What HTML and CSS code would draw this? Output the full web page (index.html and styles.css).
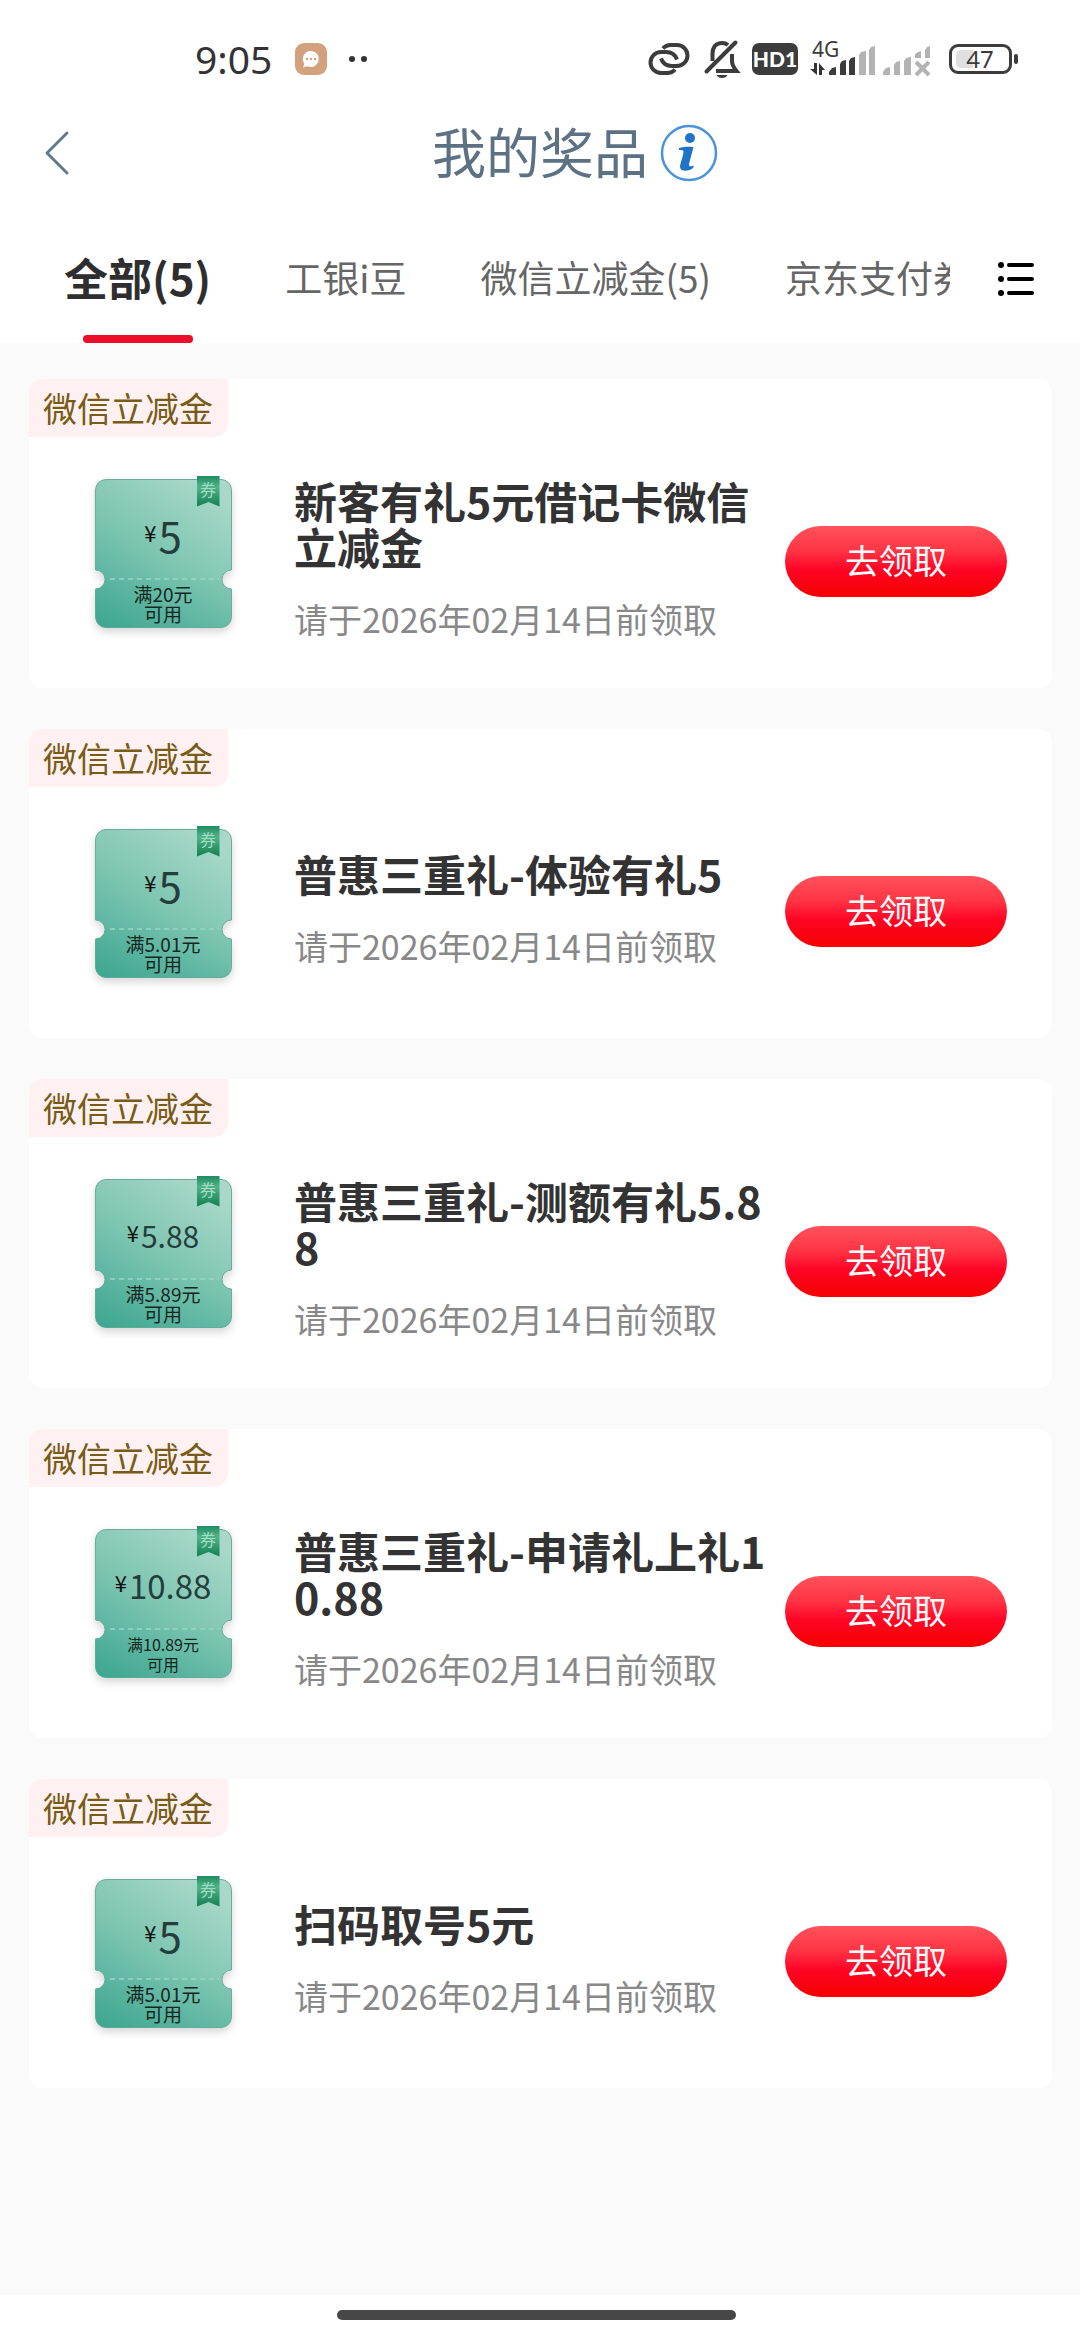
FILE: index.html
```html
<!DOCTYPE html>
<html lang="zh-CN">
<head>
<meta charset="utf-8">
<meta name="viewport" content="width=device-width, initial-scale=1">
<title>我的奖品</title>
<link rel="stylesheet" href="styles.css">
</head>
<body>
<svg class="defs" width="0" height="0" aria-hidden="true">
  <defs>
    <linearGradient id="ticket-fill" x1="0.1" y1="1" x2="0.75" y2="0">
      <stop offset="0" stop-color="#45aa95"/>
      <stop offset="0.5" stop-color="#7cc5b1"/>
      <stop offset="1" stop-color="#a9d8c8"/>
    </linearGradient>
    <linearGradient id="ticket-stub" x1="0" y1="1" x2="1" y2="0">
      <stop offset="0" stop-color="#36a38c" stop-opacity="0.5"/>
      <stop offset="1" stop-color="#6fc0aa" stop-opacity="0.2"/>
    </linearGradient>
    <linearGradient id="ribbon-fill" x1="0" y1="0" x2="0" y2="1">
      <stop offset="0" stop-color="#1f8a60"/>
      <stop offset="0.35" stop-color="#4fb38a"/>
      <stop offset="1" stop-color="#148052"/>
    </linearGradient>
    <filter id="ticket-shadow" x="-20%" y="-20%" width="140%" height="140%">
      <feDropShadow dx="0" dy="4" stdDeviation="4" flood-color="#000" flood-opacity="0.16"/>
    </filter>
    <symbol id="ticket" viewBox="0 0 160 171">
      <path filter="url(#ticket-shadow)" fill="url(#ticket-fill)" stroke="#6aab9a" d="M23 3.500H138a10.500 10.500 0 0 1 10.500 10.500V94a9.500 9.500 0 0 0 0 19V141a10.500 10.500 0 0 1-10.500 10.500H23a10.500 10.500 0 0 1-10.500-10.500V113a9.500 9.500 0 0 0 0-19V14A10.500 10.500 0 0 1 23 3.500z"/>
      <path fill="url(#ticket-stub)" d="M22 103.500H139a9.500 9.500 0 0 0 9.500 9.500V141a10.500 10.500 0 0 1-10.500 10.500H23a10.500 10.500 0 0 1-10.500-10.500V113a9.500 9.500 0 0 0 9.500-9.500z"/>
      <path fill="none" stroke="#9bd6c5" stroke-width="1.500" stroke-dasharray="5 4" d="M27 103H136"/>
      <path fill="url(#ribbon-fill)" d="M114 0H136.500V30.500L125.500 26 114 30.500z"/>
      <text x="125" y="20" text-anchor="middle" class="ribbon-text">券</text>
    </symbol>
  </defs>
</svg>

<div class="page">
  <header class="header">
    <div class="status">
      <div class="status-left">
        <span class="clock">9:05</span>
        <svg class="chat-icon" width="32" height="32" viewBox="0 0 32 32" aria-hidden="true">
          <rect width="32" height="32" rx="9" fill="#d3a27c"/>
          <path d="M16 8a8 8 0 1 1-3.500 15.300L8 24.500l1.400-3.800A8 8 0 0 1 16 8z" fill="#fff"/>
          <g fill="#d3a27c"><circle cx="12" cy="16" r="1.200"/><circle cx="16" cy="16" r="1.200"/><circle cx="20" cy="16" r="1.200"/></g>
        </svg>
        <svg width="18" height="6" viewBox="0 0 18 6" aria-hidden="true"><g fill="#333"><circle cx="3" cy="3" r="3"/><circle cx="15" cy="3" r="3"/></g></svg>
      </div>
      <div class="status-right">
        <svg class="link-icon" width="42" height="38" viewBox="0 0 42 38" fill="none" stroke="#3c3c3c" stroke-width="4" aria-hidden="true">
          <path d="M15 8.500C17 6 20 5 23 5h6a10.500 10.500 0 0 1 0 21h-5c-5 0-9-2-11-7.500"/>
          <path d="M27 29.500C25 32 22 33 19 33h-6a10.500 10.500 0 0 1 0-21h5c5 0 9 2 11 7.500"/>
        </svg>
        <svg class="bell-icon" width="36" height="38" viewBox="0 0 36 38" fill="none" stroke="#3c3c3c" stroke-width="4" aria-hidden="true">
          <path d="M8.500 21V14C8.500 7 12 3 18 3c2.500 0 4.500.700 6 2"/>
          <path d="M28 14v7c0 4 2 7 4.500 10H12"/>
          <path d="M31.500 2.500L2.500 31.500" stroke-linecap="round"/>
          <path d="M12.500 35h11c-1.500 4-9.500 4-11 0z" fill="#3c3c3c" stroke="none"/>
        </svg>
        <span class="hd">HD1</span>
        <svg class="signal" width="68" height="36" viewBox="0 0 68 36" aria-hidden="true">
          <text x="3" y="16" class="net">4G</text>
          <path d="M1 28h4V22h3V34zM10 34V22l6 7h-3v5z" fill="#333"/>
          <g fill="#3c3c3c"><path d="M20 34v-3l3-4 4-1v8zM31 34V23l2-3 4-1v15zM40 34V20l2-3 4-1v18z"/></g>
          <g fill="#b3b3b3"><path d="M50 34V14l2-3 5-1v24zM60 34V9l2-3 4-1v29z"/></g>
        </svg>
        <svg class="signal-off" width="49" height="36" viewBox="0 0 49 36" fill="#b3b3b3" aria-hidden="true">
          <path d="M0 34v-3l3-4 4-1v8zM11 34V24l2-3 4-1v14zM21 34V20l2-3 5-1v18zM32 17v-4l3-2 3-1v7zM42 17V9l2-3 3-1v12z"/>
          <path d="M33 21l13 13M46 21L33 34" stroke="#b3b3b3" stroke-width="4"/>
        </svg>
        <svg class="battery" width="69" height="32" viewBox="0 0 69 32" aria-hidden="true">
          <rect x="1.500" y="2.500" width="60" height="27" rx="7.500" fill="#fff" stroke="#3c3c3c" stroke-width="3"/>
          <path d="M24 7H12a5 5 0 0 0-5 5v8a5 5 0 0 0 5 5h12z" fill="#e0e0e0"/>
          <rect x="65" y="11" width="4" height="10" rx="2" fill="#3c3c3c"/>
          <text x="31" y="25" text-anchor="middle" class="level">47</text>
        </svg>
      </div>
    </div>

    <div class="titlebar">
      <button class="back" type="button" aria-label="返回">
        <svg width="26" height="44" viewBox="0 0 26 44" fill="none" stroke="#5f7a8c" stroke-width="3" stroke-linecap="round" stroke-linejoin="round" aria-hidden="true"><path d="M23 2L3 22l20 20"/></svg>
      </button>
      <h1>我的奖品</h1>
      <button class="info" type="button" aria-label="说明">
        <svg width="58" height="58" viewBox="0 0 58 58" aria-hidden="true">
          <circle cx="29" cy="29" r="27" fill="#fff" stroke="#4b93d8" stroke-width="2.500"/>
          <circle cx="30" cy="14" r="5" fill="#1f74c8"/>
          <path d="M19 24c5-1.500 10-1.500 14.500-1l-4.500 17c-.5 2.500 1.500 3 4.500 1.500v2c-4 4-13 5-13.500-.5 0-3 3.500-12 3.500-15.500 0-1.500-1.500-1.500-4.500-1.500z" fill="#1f74c8"/>
        </svg>
      </button>
    </div>

    <div class="tabbar">
      <nav class="tabs" aria-label="奖品分类">
        <a class="tab active" href="#all" aria-current="page">全部(5)</a>
        <a class="tab" href="#bean">工银i豆</a>
        <a class="tab" href="#wechat">微信立减金(5)</a>
        <a class="tab" href="#jd">京东支付券</a>
      </nav>
      <button class="menu" type="button" aria-label="全部分类">
        <svg width="36" height="34" viewBox="0 0 36 34" aria-hidden="true">
          <path d="M11 3h23M11 17h23M11 31h23" stroke="#000" stroke-width="4" stroke-linecap="round"/>
          <circle cx="3" cy="3" r="3"/><circle cx="3" cy="17" r="3"/><circle cx="3" cy="31" r="3"/>
        </svg>
      </button>
    </div>
  </header>

  <main class="list">
    <article class="card">
      <span class="tag">微信立减金</span>
      <div class="card-body">
        <div class="ticket">
          <svg class="ticket-art" width="160" height="171" aria-hidden="true"><use href="#ticket"/></svg>
          <div class="ticket-text">
            <p class="amount"><span class="yen">¥</span>5</p>
            <p class="limit">满20元<br>可用</p>
          </div>
        </div>
        <div class="detail">
          <h2>新客有礼5元借记卡微信立减金</h2>
          <p class="date">请于2026年02月14日前领取</p>
        </div>
        <button class="claim" type="button">去领取</button>
      </div>
    </article>

    <article class="card">
      <span class="tag">微信立减金</span>
      <div class="card-body">
        <div class="ticket">
          <svg class="ticket-art" width="160" height="171" aria-hidden="true"><use href="#ticket"/></svg>
          <div class="ticket-text">
            <p class="amount"><span class="yen">¥</span>5</p>
            <p class="limit">满5.01元<br>可用</p>
          </div>
        </div>
        <div class="detail">
          <h2>普惠三重礼-体验有礼5</h2>
          <p class="date">请于2026年02月14日前领取</p>
        </div>
        <button class="claim" type="button">去领取</button>
      </div>
    </article>

    <article class="card">
      <span class="tag">微信立减金</span>
      <div class="card-body">
        <div class="ticket">
          <svg class="ticket-art" width="160" height="171" aria-hidden="true"><use href="#ticket"/></svg>
          <div class="ticket-text">
            <p class="amount small"><span class="yen">¥</span>5.88</p>
            <p class="limit">满5.89元<br>可用</p>
          </div>
        </div>
        <div class="detail">
          <h2>普惠三重礼-测额有礼5.88</h2>
          <p class="date">请于2026年02月14日前领取</p>
        </div>
        <button class="claim" type="button">去领取</button>
      </div>
    </article>

    <article class="card">
      <span class="tag">微信立减金</span>
      <div class="card-body">
        <div class="ticket">
          <svg class="ticket-art" width="160" height="171" aria-hidden="true"><use href="#ticket"/></svg>
          <div class="ticket-text">
            <p class="amount medium"><span class="yen">¥</span>10.88</p>
            <p class="limit narrow">满10.89元<br>可用</p>
          </div>
        </div>
        <div class="detail">
          <h2>普惠三重礼-申请礼上礼10.88</h2>
          <p class="date">请于2026年02月14日前领取</p>
        </div>
        <button class="claim" type="button">去领取</button>
      </div>
    </article>

    <article class="card">
      <span class="tag">微信立减金</span>
      <div class="card-body">
        <div class="ticket">
          <svg class="ticket-art" width="160" height="171" aria-hidden="true"><use href="#ticket"/></svg>
          <div class="ticket-text">
            <p class="amount"><span class="yen">¥</span>5</p>
            <p class="limit">满5.01元<br>可用</p>
          </div>
        </div>
        <div class="detail">
          <h2>扫码取号5元</h2>
          <p class="date">请于2026年02月14日前领取</p>
        </div>
        <button class="claim" type="button">去领取</button>
      </div>
    </article>
  </main>

  <footer class="gesture"><span class="gesture-bar"></span></footer>
</div>
</body>
</html>
```
FILE: styles.css
```css
* {
  box-sizing: border-box;
}

body,
h1,
h2,
p {
  margin: 0;
}

body {
  background: #fff;
  color: #333;
  font-family: "Noto Sans CJK SC", "Noto Sans", sans-serif;
}

button {
  padding: 0;
  border: 0;
  background: none;
  font-family: inherit;
  cursor: pointer;
}

svg {
  display: block;
  flex: none;
  overflow: visible;
}

.defs {
  position: absolute;
}

.page {
  display: flex;
  flex-direction: column;
  min-height: 100vh;
}

/* status bar */

.status {
  display: flex;
  justify-content: space-between;
  align-items: center;
  height: 118px;
  padding: 0 62px 0 195px;
}

.status-left,
.status-right {
  display: flex;
  align-items: center;
}

.clock {
  font-family: "Noto Sans", sans-serif;
  font-size: 39px;
  line-height: 52px;
}

.chat-icon {
  margin: 0 22px 0 23px;
}

.bell-icon {
  margin: 0 12px 0 14px;
}

.hd {
  width: 46px;
  border-radius: 7px;
  background: #3c3c3c;
  color: #fff;
  font-family: Lato, sans-serif;
  font-size: 21px;
  font-weight: 900;
  line-height: 32px;
  text-align: center;
}

.signal {
  margin: 0 6px 0 11px;
}

.battery {
  margin-left: 17px;
}

.net,
.level {
  fill: #3c3c3c;
  font-family: "Noto Sans", sans-serif;
}

.net {
  font-size: 21px;
}

.level {
  font-size: 24px;
}

/* title bar */

.titlebar {
  display: grid;
  grid-template-columns: 1fr auto 1fr;
  align-items: center;
  column-gap: 12px;
  height: 70px;
  padding: 0 44px;
}

.back,
.info {
  justify-self: start;
}

h1 {
  padding-bottom: 4px;
  color: #5c7184;
  font-size: 54px;
  font-weight: 400;
  line-height: 66px;
}

/* category tabs */

.tabbar {
  display: flex;
  height: 155px;
  padding: 0 46px 0 64px;
}

.tabs {
  display: flex;
  flex: 1;
  gap: 74px;
  min-width: 0;
  margin-right: 48px;
  overflow: hidden;
}

.tab {
  display: flex;
  flex: none;
  flex-direction: column;
  align-items: center;
  justify-content: space-between;
  padding-top: 61px;
  color: #666;
  font-size: 37px;
  line-height: 56px;
  text-decoration: none;
}

.tab.active {
  color: #2e2e2e;
  font-size: 44px;
  font-weight: 700;
}

.tab.active::after {
  width: 110px;
  height: 8px;
  border-radius: 4px;
  background: #ed0c2a;
  content: "";
}

.menu {
  padding-top: 26px;
}

/* prize cards */

.list {
  display: flex;
  flex: 1;
  flex-direction: column;
  gap: 41px;
  padding: 36px 28px 41px 29px;
  background: #fafafa;
}

.card {
  display: flex;
  flex-direction: column;
  align-items: flex-start;
  min-height: 309px;
  border-radius: 14px;
  background: #fff;
}

.tag {
  padding: 0 15px 0 14px;
  border-radius: 14px 0 14px 0;
  background: #fff1f1;
  color: #785b16;
  font-size: 34px;
  line-height: 58px;
}

.card-body {
  display: flex;
  flex: 1;
  align-items: center;
  align-self: stretch;
  padding: 0 45px 2px 54px;
}

.ticket {
  display: grid;
  flex: none;
}

.ticket-art,
.ticket-text {
  grid-area: 1 / 1;
}

.ticket-text {
  padding-top: 32px;
  color: #243f3b;
  text-align: center;
}

.ribbon-text {
  fill: #a5dcc2;
  font-size: 16px;
}

.amount {
  display: flex;
  justify-content: center;
  gap: 2px;
  height: 76px;
  font-size: 42px;
  line-height: 54px;
}

.amount.medium {
  font-size: 33px;
}

.amount.small {
  font-size: 30px;
}

.yen {
  color: #111;
  font-size: 22px;
  line-height: 48px;
}

.limit {
  color: #17261f;
  font-size: 19px;
  line-height: 20px;
}

.limit.narrow {
  font-size: 16px;
}

.detail {
  display: flex;
  flex: 1;
  flex-direction: column;
  gap: 27px;
  margin-left: 51px;
  margin-right: 11px;
  padding-bottom: 4px;
}

h2 {
  font-size: 43px;
  font-weight: 700;
  line-height: 46px;
  word-break: break-all;
}

.date {
  color: #888;
  font-size: 34px;
  line-height: 46px;
}

.claim {
  flex: none;
  width: 222px;
  height: 71px;
  padding-bottom: 4px;
  border-radius: 36px;
  background: linear-gradient(#ff525c 0%, #ff3444 35%, #ff0424 62%, #f60000 100%);
  color: #fff;
  font-size: 34px;
  line-height: 66px;
}

/* gesture bar */

.gesture {
  display: flex;
  justify-content: center;
  padding: 15px 7px 20px 0;
}

.gesture-bar {
  width: 399px;
  height: 10px;
  border-radius: 5px;
  background: #474747;
}
```
